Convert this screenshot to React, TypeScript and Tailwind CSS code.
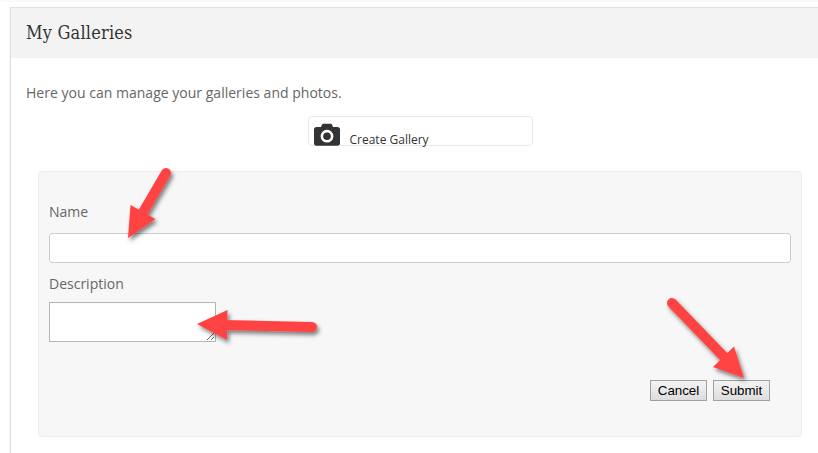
import { useState } from "react";

type Point = [number, number];

// Tail, neck and head outline of each callout arrow
const arrows: { tail: Point; neck: Point; head: string }[] = [
    { tail: [166, 173], neck: [142, 214], head: "128,238 130.5,205 155.5,219" },
    { tail: [312, 327], neck: [222, 325], head: "197,324 227.5,310 227,340" },
    { tail: [672, 303], neck: [726, 359], head: "744,378 734,346.5 713,367" },
];

function CameraIcon() {
    return (
        <svg width="26" height="23" viewBox="0 0 26 23" fill="#333" aria-hidden="true">
            <path
                fillRule="evenodd"
                d="M7 4 8 1.6Q8.4.7 9.4.7h7.2q1 0 1.4.9L19 4h4.4Q26 4 26 6.6V20q0 2.7-2.6 2.7H2.6Q0 22.7 0 20V6.6Q0 4 2.6 4ZM13 6.8a6.4 6.4 0 1 0 0 12.8 6.4 6.4 0 1 0 0-12.8Z"
            />
            <circle cx="13" cy="13.2" r="3.8" />
        </svg>
    );
}

function Arrows() {
    return (
        <svg className="absolute left-0 top-0 pointer-events-none" width="818" height="453" aria-hidden="true">
            <defs>
                <filter id="arrow-shadow" x="-20%" y="-20%" width="150%" height="150%">
                    <feDropShadow dx="2" dy="3" stdDeviation="2" floodColor="#000" floodOpacity="0.5" />
                </filter>
            </defs>
            {arrows.map(({ tail, neck, head }) => (
                <g key={head} filter="url(#arrow-shadow)" fill="#ff4343">
                    <path
                        d={`M${tail[0]} ${tail[1]}L${neck[0]} ${neck[1]}`}
                        stroke="#ff4343"
                        strokeWidth="10"
                        strokeLinecap="round"
                    />
                    <polygon points={head} />
                </g>
            ))}
        </svg>
    );
}

const buttonClass =
    "h-[21px] w-[57px] border border-[#a0a0a0] bg-gradient-to-b from-[#f4f4f4] to-[#dddddd] font-['Liberation_Sans',Arial,sans-serif] text-[13.33px] leading-[19px] text-black";

export default function App() {
    const [name, setName] = useState("");
    const [description, setDescription] = useState("");

    return (
        <div className="relative flex h-[453px] w-[818px] flex-col overflow-hidden bg-white font-['Open_Sans',sans-serif] text-sm text-[#666]">
            {/* Bottom edge of the page bar */}
            <div className="h-[2px] shrink-0 bg-[#f9f9f9]" />

            <main className="ml-[10px] mt-[5px] flex-1 border-l border-t border-[#e1e1e1] shadow-[-1px_0_1px_rgba(0,0,0,0.04)]">
                <header className="flex h-[50px] items-center bg-[#f3f3f3] pl-[15px]">
                    <h1 className="font-['Roboto_Slab','DejaVu_Serif_Condensed','DejaVu_Serif',serif] text-[18px] leading-6 tracking-[0.2px] text-[#333]">
                        My Galleries
                    </h1>
                </header>

                <p className="mt-[25px] pl-[15px] leading-5 tracking-[0.015px]">Here you can manage your galleries and photos.</p>

                {/* Create button */}
                <button className="ml-[297px] mt-[13px] flex h-[30px] w-[225px] rounded border border-[#e8e8e8] bg-white pl-[4.5px] pt-[6px] text-left text-xs text-[#333]">
                    <CameraIcon />
                    <span className="ml-[10px] mt-[9px] leading-4">Create Gallery</span>
                </button>

                {/* Gallery form */}
                <form
                    className="ml-[27px] mt-[25px] flex h-[266px] w-[764px] flex-col rounded border border-[#ededed] bg-[#f7f7f7] px-[10px] pt-[30px]"
                    onSubmit={(e) => e.preventDefault()}
                >
                    <label htmlFor="name" className="leading-5">Name</label>
                    <input
                        id="name"
                        value={name}
                        onChange={(e) => setName(e.target.value)}
                        className="mt-[11px] h-[30px] w-full shrink-0 rounded-[3px] border border-[#ccc] bg-white px-2"
                    />
                    <label htmlFor="description" className="mt-[11px] leading-5">Description</label>
                    <textarea
                        id="description"
                        value={description}
                        onChange={(e) => setDescription(e.target.value)}
                        className="mt-[8px] h-[40px] w-[167px] shrink-0 resize border border-[#b5b5b5] bg-white p-[2px]"
                    />
                    <div className="mt-[38px] flex justify-end gap-[6px] pr-[21px]">
                        <button type="button" className={buttonClass}>Cancel</button>
                        <button type="submit" className={buttonClass}>Submit</button>
                    </div>
                </form>
            </main>

            <Arrows />
        </div>
    );
}
